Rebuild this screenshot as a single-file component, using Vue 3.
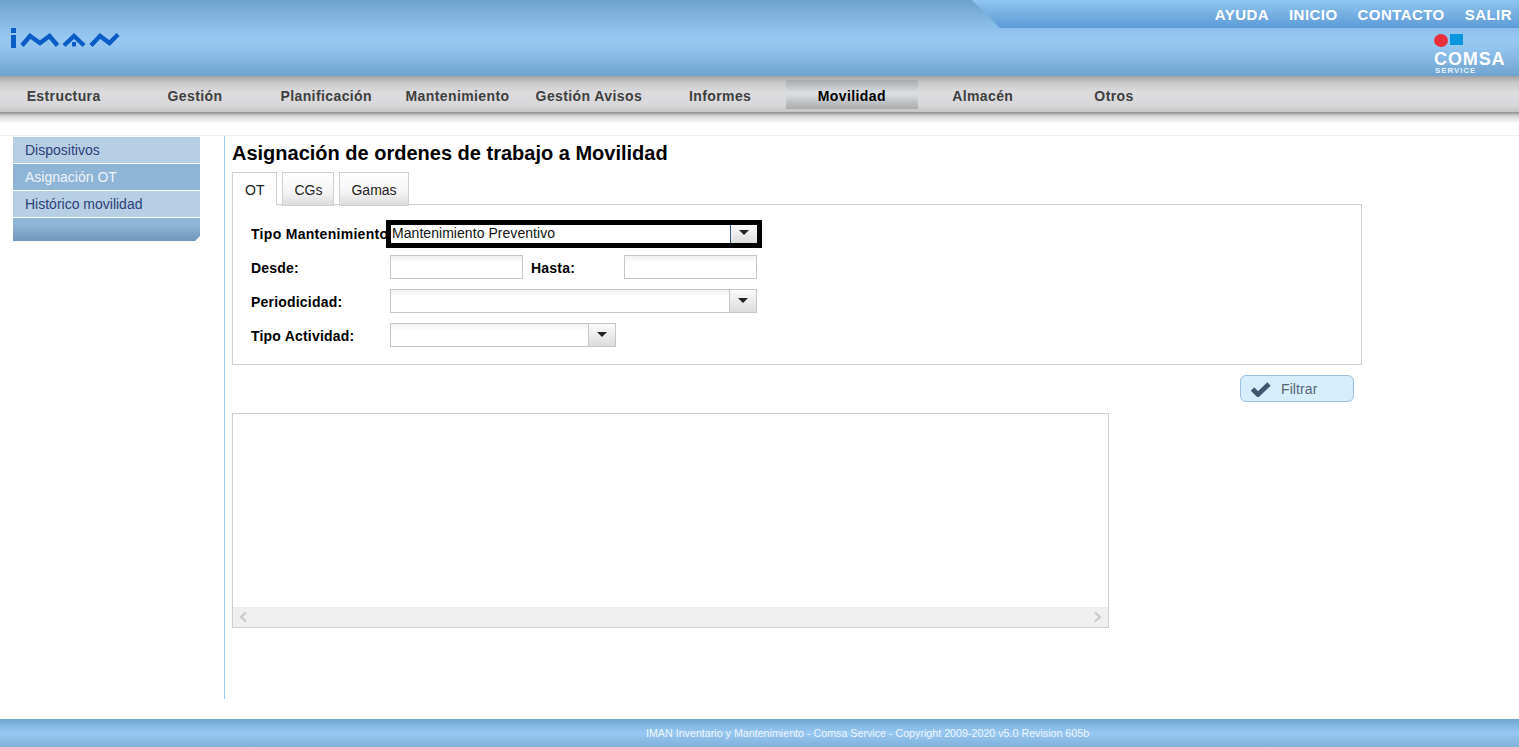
<script setup>
const menu = ['Estructura', 'Gestión', 'Planificación', 'Mantenimiento', 'Gestión Avisos', 'Informes', 'Movilidad', 'Almacén', 'Otros']
const topLinks = ['AYUDA', 'INICIO', 'CONTACTO', 'SALIR']
const sideItems = ['Dispositivos', 'Asignación OT', 'Histórico movilidad']
const tabs = ['OT', 'CGs', 'Gamas']
</script>

<template>
  <div class="page">
    <header class="header">
      <svg class="logo" width="110" height="22" viewBox="0 0 110 22">
        <g fill="#0b5cc4">
          <rect x="0" y="0" width="5" height="5" />
          <rect x="0" y="7" width="5" height="13" />
        </g>
        <g fill="none" stroke="#0b5cc4" stroke-width="4.4">
          <path d="M11 17.5 L19 8 L29 15 L38.5 8 L46.5 17.5" />
          <path d="M53 17.5 L63 8 L73 17.5" />
          <path d="M80 17.5 L89 8 L98.5 15 L107 6.5" />
        </g>
        <rect x="61" y="14" width="4" height="4.5" fill="#0b5cc4" />
      </svg>
      <nav class="top-links">
        <a v-for="link in topLinks" :key="link">{{ link }}</a>
      </nav>
      <div class="comsa">
        <div class="comsa-marks">
          <span class="dot"></span>
          <span class="square"></span>
        </div>
        <div class="comsa-name">COMSA</div>
        <div class="comsa-sub">SERVICE</div>
      </div>
    </header>

    <nav class="menu">
      <a v-for="item in menu" :key="item" :class="{ active: item === 'Movilidad' }">{{ item }}</a>
    </nav>
    <div class="menu-shadow"></div>

    <div class="body">
      <aside class="side">
        <a v-for="item in sideItems" :key="item" :class="{ current: item === 'Asignación OT' }">{{ item }}</a>
        <div class="side-end"></div>
      </aside>

      <main class="content">
        <h1>Asignación de ordenes de trabajo a Movilidad</h1>
        <div class="tabs">
          <a v-for="tab in tabs" :key="tab" :class="{ selected: tab === 'OT' }">{{ tab }}</a>
        </div>

        <section class="panel">
          <div class="row first">
            <label class="wide">Tipo Mantenimiento</label>
            <div class="combo focused">
              <span class="value">Mantenimiento Preventivo</span>
              <span class="arrow"></span>
            </div>
          </div>
          <div class="row">
            <label>Desde:</label>
            <input class="date" type="text" />
            <label class="to">Hasta:</label>
            <input class="date" type="text" />
          </div>
          <div class="row">
            <label>Periodicidad:</label>
            <div class="combo long">
              <span class="value"></span>
              <span class="arrow"></span>
            </div>
          </div>
          <div class="row">
            <label>Tipo Actividad:</label>
            <div class="combo short">
              <span class="value"></span>
              <span class="arrow"></span>
            </div>
          </div>
        </section>

        <div class="actions">
          <button class="filter" type="button">
            <svg width="20" height="16" viewBox="0 0 20 16">
              <path d="M1.5 8 L7 13.5 L18 3" fill="none" stroke="#3f566c" stroke-width="4.8" />
            </svg>
            Filtrar
          </button>
        </div>

        <div class="grid">
          <div class="grid-body"></div>
          <div class="scrollbar">
            <svg width="10" height="12" viewBox="0 0 10 12">
              <path d="M8 1.5 L3 6 L8 10.5" fill="none" stroke="#c8c8c8" stroke-width="2" />
            </svg>
            <svg width="10" height="12" viewBox="0 0 10 12">
              <path d="M2 1.5 L7 6 L2 10.5" fill="none" stroke="#c8c8c8" stroke-width="2" />
            </svg>
          </div>
        </div>
      </main>
    </div>

    <footer class="footer">IMAN Inventario y Mantenimiento - Comsa Service - Copyright 2009-2020 v5.0 Revision 605b</footer>
  </div>
</template>

<style>
html, body {
  margin: 0;
  background: #fff;
}
</style>

<style scoped>
.page {
  height: 747px;
  overflow: hidden;
  display: flex;
  flex-direction: column;
  font-family: "Liberation Sans", Arial, sans-serif;
  color: #000;
}

.header {
  position: relative;
  height: 76px;
  flex: none;
  background: linear-gradient(#6fa3cf, #96c8f2 50%, #93c5ef 62%, #6fa3cf);
}

.logo {
  position: absolute;
  left: 11px;
  top: 28px;
}

.top-links {
  position: absolute;
  top: 0;
  right: 0;
  width: 547px;
  height: 28px;
  box-sizing: border-box;
  padding: 6px 7px 0 0;
  display: flex;
  justify-content: flex-end;
  gap: 20px;
  background: linear-gradient(#8fc5ef, #5d9ad6);
  clip-path: polygon(0 0, 100% 0, 100% 100%, 28px 100%);
}

.top-links a {
  color: #fff;
  font-size: 15px;
  font-weight: bold;
  letter-spacing: 0.45px;
}

.comsa {
  position: absolute;
  left: 1434px;
  top: 34px;
  color: #fff;
  font-weight: bold;
}

.comsa-marks {
  display: flex;
  align-items: flex-start;
  gap: 2px;
}

.dot {
  width: 14px;
  height: 13px;
  border-radius: 50%;
  background: #e8303a;
}

.square {
  width: 13px;
  height: 11px;
  background: #0a96dc;
}

.comsa-name {
  margin-top: 5px;
  font-size: 18px;
  line-height: 15px;
  letter-spacing: 0.9px;
}

.comsa-sub {
  font-size: 8px;
  line-height: 7px;
  letter-spacing: 0.9px;
  margin-left: 1px;
  color: #e4f0fa;
}

.menu {
  flex: none;
  height: 36px;
  box-sizing: border-box;
  padding: 4px 0 3px;
  display: flex;
  background: linear-gradient(#a2a2a2, #c8c8c8 18%, #dcdcde 45%, #d8d8da 80%, #c6c6c6);
}

.menu a {
  width: 131.3px;
  height: 29px;
  line-height: 32px;
  text-align: center;
  font-size: 14px;
  font-weight: bold;
  letter-spacing: 0.4px;
  color: #3f3f3f;
  position: relative;
  left: -2px;
}

.menu a.active {
  width: 132px;
  margin-right: -0.7px;
  color: #000;
  background: linear-gradient(#a6a8aa, #dde1e5 45%, #a9abad);
}

.menu-shadow {
  flex: none;
  height: 24px;
  box-sizing: border-box;
  border-bottom: 1px solid #f0f0f0;
  background: linear-gradient(#8e8e8e, #d8d8d8 18%, #fdfdfd 50%, #fff);
}

.body {
  flex: none;
  height: 563px;
  display: flex;
  padding-left: 13px;
}

.side {
  width: 187px;
  margin-top: 1px;
  display: flex;
  flex-direction: column;
  align-self: flex-start;
}

.side a {
  height: 26px;
  line-height: 26px;
  margin-bottom: 1px;
  padding-left: 12px;
  font-size: 14px;
  color: #2d3f78;
  background: #b7cfe4;
}

.side a.current {
  color: #eef4fa;
  background: #8fb5d6;
}

.side-end {
  height: 23px;
  background: linear-gradient(#8fb5d6 30%, #6f95ba);
  clip-path: polygon(0 0, 100% 0, 100% 18px, calc(100% - 5px) 100%, 0 100%);
}

.content {
  margin-left: 24px;
  width: 1138px;
  padding-left: 7px;
  border-left: 1px solid #9ccaf3;
}

h1 {
  margin: 6px 0 0;
  font-size: 20px;
  line-height: 23px;
  font-weight: bold;
}

.tabs {
  display: flex;
  gap: 5px;
  margin-top: 7px;
  height: 33px;
  position: relative;
  z-index: 1;
}

.tabs a {
  box-sizing: border-box;
  height: 34px;
  padding: 0 11px;
  line-height: 35px;
  font-size: 14px;
  color: #222;
  border: 1px solid #d0d0d0;
  background: linear-gradient(#fff, #f4f4f4 60%, #dcdcdc);
}

.tabs a.selected {
  padding: 0 12px;
  background: #fff;
  border-bottom-color: #fff;
}

.panel {
  box-sizing: border-box;
  width: 1130px;
  height: 161px;
  margin-top: -1px;
  padding: 15px 0 0 18px;
  border: 1px solid #cfcfcf;
}

.row {
  display: flex;
  align-items: center;
  height: 24px;
  margin-bottom: 10px;
}

.row.first {
  height: 28px;
  margin-bottom: 7px;
}

label {
  width: 139px;
  flex: none;
  font-size: 14px;
  font-weight: bold;
  letter-spacing: 0.2px;
  padding-top: 1px;
}

label.wide {
  width: 135px;
  padding-top: 0;
  letter-spacing: 0.3px;
  white-space: nowrap;
}

label.to {
  width: 93px;
  margin-left: 8px;
}

.date {
  box-sizing: border-box;
  width: 133px;
  height: 24px;
  padding: 0;
  border: 1px solid #c6c6c6;
  border-radius: 0;
  background: linear-gradient(#f1f1f1, #fff 30%);
  outline: none;
}

.combo {
  box-sizing: border-box;
  display: flex;
  height: 24px;
  border: 1px solid #c6c6c6;
  background: linear-gradient(#f1f1f1, #fff 30%);
}

.combo.long {
  width: 367px;
}

.combo.short {
  width: 226px;
}

.combo.focused {
  width: 376px;
  height: 28px;
  border: 5px solid #000;
  background: #fff;
}

.value {
  flex: 1;
  padding-left: 1px;
  font-size: 14px;
  line-height: 17px;
  letter-spacing: 0.05px;
  color: #111;
}

.arrow {
  width: 26px;
  flex: none;
  position: relative;
  border-left: 1px solid #c6c6c6;
  background: linear-gradient(#fbfbfb, #dcdcdc);
}

.focused .arrow {
  border-left-color: #3a5f8f;
}

.arrow::after {
  content: "";
  position: absolute;
  left: 8px;
  top: 8px;
  border-left: 5px solid transparent;
  border-right: 5px solid transparent;
  border-top: 5px solid #222;
}

.focused .arrow::after {
  top: 5px;
}

.actions {
  width: 1122px;
  height: 48px;
  display: flex;
  justify-content: flex-end;
  align-items: flex-start;
  padding-top: 10px;
  box-sizing: border-box;
}

.filter {
  box-sizing: border-box;
  width: 114px;
  height: 27px;
  padding: 0 0 0 10px;
  display: flex;
  align-items: center;
  gap: 10px;
  font: 14px "Liberation Sans", Arial, sans-serif;
  letter-spacing: 0.1px;
  color: #566676;
  border: 1px solid #9dbfe0;
  border-radius: 6px;
  background: #d6edfc;
}

.grid {
  box-sizing: border-box;
  width: 877px;
  height: 215px;
  display: flex;
  flex-direction: column;
  border: 1px solid #cfcfcf;
}

.grid-body {
  flex: 1;
}

.scrollbar {
  height: 20px;
  flex: none;
  display: flex;
  align-items: center;
  justify-content: space-between;
  padding: 0 5px;
  background: #efefef;
}

.footer {
  flex: none;
  margin-top: 20px;
  height: 28px;
  line-height: 28px;
  padding-left: 646px;
  font-size: 10.7px;
  color: #f0f6fc;
  background: linear-gradient(#72a6d2, #96c8f2 50%, #7fb0da);
}
</style>
